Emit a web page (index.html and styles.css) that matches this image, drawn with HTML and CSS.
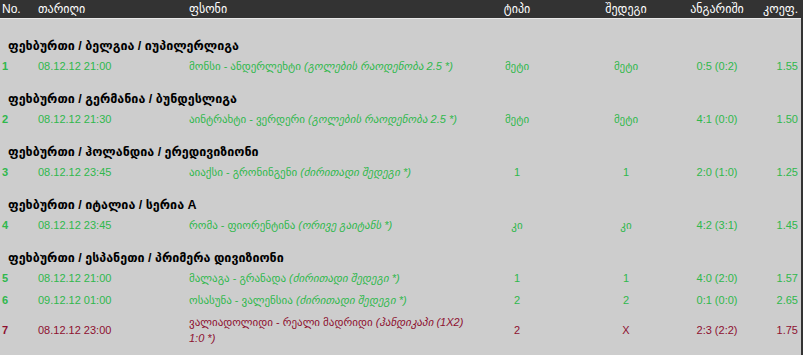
FILE: index.html
```html
<!DOCTYPE html>
<html lang="ka">
<head>
<meta charset="utf-8">
<title>ფსონები</title>
<link rel="stylesheet" href="styles.css">
</head>
<body>
<div class="board">
  <div class="head grid">
    <div>No.</div>
    <div>თარიღი</div>
    <div>ფსონი</div>
    <div class="c">ტიპი</div>
    <div class="c">შედეგი</div>
    <div class="c">ანგარიში</div>
    <div class="r">კოეფ.</div>
  </div>
  <div class="list">
    <div class="title first">ფეხბურთი / ბელგია / იუპილერლიგა</div>
    <div class="row grid win">
      <div class="num">1</div>
      <div>08.12.12 21:00</div>
      <div>მონსი - ანდერლეხტი <i>(გოლების რაოდენობა 2.5 *)</i></div>
      <div class="c">მეტი</div>
      <div class="c">მეტი</div>
      <div class="c">0:5 (0:2)</div>
      <div class="r">1.55</div>
    </div>
    <div class="title">ფეხბურთი / გერმანია / ბუნდესლიგა</div>
    <div class="row grid win">
      <div class="num">2</div>
      <div>08.12.12 21:30</div>
      <div>აინტრახტი - ვერდერი <i>(გოლების რაოდენობა 2.5 *)</i></div>
      <div class="c">მეტი</div>
      <div class="c">მეტი</div>
      <div class="c">4:1 (0:0)</div>
      <div class="r">1.50</div>
    </div>
    <div class="title">ფეხბურთი / ჰოლანდია / ერედივიზიონი</div>
    <div class="row grid win">
      <div class="num">3</div>
      <div>08.12.12 23:45</div>
      <div>აიაქსი - გრონინგენი <i>(ძირითადი შედეგი *)</i></div>
      <div class="c">1</div>
      <div class="c">1</div>
      <div class="c">2:0 (1:0)</div>
      <div class="r">1.25</div>
    </div>
    <div class="title">ფეხბურთი / იტალია / სერია A</div>
    <div class="row grid win">
      <div class="num">4</div>
      <div>08.12.12 23:45</div>
      <div>რომა - ფიორენტინა <i>(ორივე გაიტანს *)</i></div>
      <div class="c">კი</div>
      <div class="c">კი</div>
      <div class="c">4:2 (3:1)</div>
      <div class="r">1.45</div>
    </div>
    <div class="title">ფეხბურთი / ესპანეთი / პრიმერა დივიზიონი</div>
    <div class="row grid win">
      <div class="num">5</div>
      <div>08.12.12 21:00</div>
      <div>მალაგა - გრანადა <i>(ძირითადი შედეგი *)</i></div>
      <div class="c">1</div>
      <div class="c">1</div>
      <div class="c">4:0 (2:0)</div>
      <div class="r">1.57</div>
    </div>
    <div class="row grid win">
      <div class="num">6</div>
      <div>09.12.12 01:00</div>
      <div>ოსასუნა - ვალენსია <i>(ძირითადი შედეგი *)</i></div>
      <div class="c">2</div>
      <div class="c">2</div>
      <div class="c">0:1 (0:0)</div>
      <div class="r">2.65</div>
    </div>
    <div class="row grid lose">
      <div class="num">7</div>
      <div>08.12.12 23:00</div>
      <div>ვალიადოლიდი - რეალი მადრიდი <i>(ჰანდიკაპი (1X2)</i> <i>1:0 *)</i></div>
      <div class="c">2</div>
      <div class="c">X</div>
      <div class="c">2:3 (2:2)</div>
      <div class="r">1.75</div>
    </div>
  </div>
</div>
</body>
</html>
```

FILE: styles.css
```css
html, body {
  margin: 0;
  padding: 0;
  background: #333333;
}
body {
  font-family: "Liberation Sans", "DejaVu Sans", Arial, sans-serif;
  font-size: 11px;
}
.board {
  width: 801px;
  min-height: 355px;
  background: #cdcdcd;
}
.grid {
  display: grid;
  grid-template-columns: 36px 151px 283px 90px 128px 54px 54px;
  padding-left: 2px;
  align-items: center;
}
.c { text-align: center; }
.r { text-align: right; }
.head {
  background: #333333;
  color: #ffffff;
  height: 19px;
  font-size: 12px;
  border-bottom: 1px solid #e8e8e8;
  width: 801px;
  box-sizing: border-box;
}
.list {
  padding-top: 5px;
}
.title {
  padding: 13px 0 0 8px;
  line-height: 18px;
  font-size: 12.5px;
  font-weight: bold;
  color: #000000;
}
.row {
  padding: 3px 0 3px 2px;
  line-height: 16px;
}
.win { color: #2fb84c; }
.lose { color: #8e1030; }
.num { font-weight: bold; }
.row i { font-style: italic; }
```
